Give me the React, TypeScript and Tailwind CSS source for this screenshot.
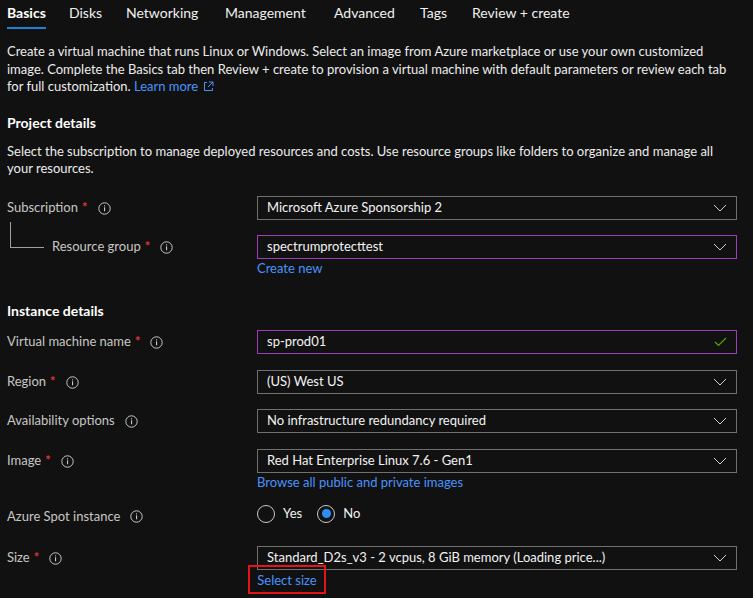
import React from "react";

const FONT = { fontFamily: "'Segoe UI', Lato, 'Noto Sans', sans-serif" };

function Info() {
  return (
    <svg width="13" height="13" viewBox="0 0 13 13" className="shrink-0">
      <circle cx="6.5" cy="6.5" r="5.7" fill="none" stroke="#c8c8c8" strokeWidth="1" />
      <rect x="6" y="5.3" width="1.1" height="4" fill="#c8c8c8" />
      <rect x="6" y="3.3" width="1.1" height="1.1" fill="#c8c8c8" />
    </svg>
  );
}

function Chevron() {
  return (
    <svg width="14" height="8" viewBox="0 0 14 8" className="shrink-0">
      <path d="M1 1 L7 7 L13 1" fill="none" stroke="#d0d0d0" strokeWidth="1" />
    </svg>
  );
}

function Check() {
  return (
    <svg width="13" height="10" viewBox="0 0 13 10" className="shrink-0">
      <path d="M1 5 L4.5 8.5 L12 1" fill="none" stroke="#57a300" strokeWidth="1.2" />
    </svg>
  );
}

function Label({ text, req, indent }: { text: string; req?: boolean; indent?: boolean }) {
  return (
    <div className={`w-[250px] shrink-0 flex items-center text-[13px] text-[#c8c6c4] pt-[1px] ${indent ? "pl-[45px]" : ""}`}>
      <span>{text}</span>
      {req && <span className="text-[#e0343b] ml-[4px] font-bold">*</span>}
      <span className="ml-[10px] flex items-center"><Info /></span>
    </div>
  );
}

function Box({ value, purple, check }: { value: string; purple?: boolean; check?: boolean }) {
  return (
    <div
      className={`w-[480px] h-[24px] flex items-center justify-between pl-[9px] pr-[9px] border ${
        purple ? "border-[#9e3cbb]" : "border-[#707070]"
      } text-[13px] text-[#f3f3f3]`}
    >
      <span className="whitespace-nowrap">{value}</span>
      {check ? <Check /> : <Chevron />}
    </div>
  );
}

function Link({ children }: { children: React.ReactNode }) {
  return <span className="text-[#4894fe] text-[13px] leading-[18px]">{children}</span>;
}

export default function App() {
  const tabs = [
    { t: "Basics", w: 62, active: true },
    { t: "Disks", w: 57 },
    { t: "Networking", w: 99 },
    { t: "Management", w: 109 },
    { t: "Advanced", w: 86 },
    { t: "Tags", w: 52 },
    { t: "Review + create", w: 130 },
  ];
  return (
    <div style={FONT} className="w-[753px] h-[598px] bg-[#111111] text-[#f0f0f0] overflow-hidden pl-[7px]">
      {/* Tabs */}
      <div className="flex h-[30px]">
        {tabs.map((tab) => (
          <div key={tab.t} style={{ width: tab.w }} className="flex flex-col items-start">
            <div className="flex flex-col">
              <span className={`text-[14px] leading-[26px] whitespace-nowrap ${tab.active ? "font-bold text-white" : "text-[#f0f0f0]"}`}>
                {tab.t}
              </span>
              <div className={`mt-[1px] h-[2px] ${tab.active ? "bg-[#1f7fd6]" : ""}`} />
            </div>
          </div>
        ))}
      </div>

      {/* Intro */}
      <div className="mt-[13px] text-[13px] leading-[17.5px] whitespace-nowrap text-[#ececec]">
        Create a virtual machine that runs Linux or Windows. Select an image from Azure marketplace or use your own customized
        <br />
        image. Complete the Basics tab then Review + create to provision a virtual machine with default parameters or review each tab
        <br />
        for full customization.{" "}
        <span className="text-[#4894fe] inline-flex items-center gap-[5px]">
          Learn more
          <svg width="11" height="11" viewBox="0 0 11 11">
            <path d="M4 1.5 H1.5 V9.5 H9.5 V7" fill="none" stroke="#4894fe" strokeWidth="1" />
            <path d="M6 1 H10 V5 M10 1 L5 6" fill="none" stroke="#4894fe" strokeWidth="1" />
          </svg>
        </span>
      </div>

      {/* Project details */}
      <div className="mt-[17px] text-[14px] leading-[20px] font-bold text-white">Project details</div>
      <div className="mt-[10px] text-[13px] leading-[17.5px] whitespace-nowrap text-[#ececec]">
        Select the subscription to manage deployed resources and costs. Use resource groups like folders to organize and manage all
        <br />
        your resources.
      </div>

      <div className="mt-[18px] flex items-center">
        <Label text="Subscription" req />
        <Box value="Microsoft Azure Sponsorship 2" />
      </div>

      <div className="mt-[15px] flex relative">
        <div className="absolute left-[3px] top-[-13px] w-[34px] h-[26px] border-l border-b border-[#a0a0a0]" />
        <div className="flex flex-col">
          <div className="flex items-center">
            <Label text="Resource group" req indent />
            <Box value="spectrumprotecttest" purple />
          </div>
          <div className="pl-[250px] h-[18px] flex items-center">
            <Link>Create new</Link>
          </div>
        </div>
      </div>

      {/* Instance details */}
      <div className="mt-[24px] text-[14px] leading-[20px] font-bold text-white">Instance details</div>

      <div className="mt-[9px] flex items-center">
        <Label text="Virtual machine name" req />
        <Box value="sp-prod01" purple check />
      </div>

      <div className="mt-[16px] flex items-center">
        <Label text="Region" req />
        <Box value="(US) West US" />
      </div>

      <div className="mt-[15px] flex items-center">
        <Label text="Availability options" />
        <Box value="No infrastructure redundancy required" />
      </div>

      <div className="mt-[16px] flex flex-col">
        <div className="flex items-center">
          <Label text="Image" req />
          <Box value="Red Hat Enterprise Linux 7.6 - Gen1" />
        </div>
        <div className="pl-[250px] h-[18px] flex items-center">
          <Link>Browse all public and private images</Link>
        </div>
      </div>

      <div className="mt-[11px] flex items-center h-[24px]">
        <div className="w-[250px] shrink-0 flex items-center text-[13px] text-[#c8c6c4] pt-[6px]">
          <span>Azure Spot instance</span>
          <span className="ml-[10px] flex items-center"><Info /></span>
        </div>
        <div className="flex items-center text-[13px] text-[#f3f3f3]">
          <div className="w-[18px] h-[18px] rounded-full border border-[#c8c8c8]" />
          <span className="ml-[8px]">Yes</span>
          <div className="ml-[15px] w-[18px] h-[18px] rounded-full border border-[#c8c8c8] flex items-center justify-center">
            <div className="w-[9px] h-[9px] rounded-full bg-[#2b8ff5]" />
          </div>
          <span className="ml-[8px]">No</span>
        </div>
      </div>

      <div className="mt-[20px] flex flex-col">
        <div className="flex items-center">
          <Label text="Size" req />
          <Box value="Standard_D2s_v3 - 2 vcpus, 8 GiB memory (Loading price...)" />
        </div>
        <div className="pl-[241px] flex">
          <div className="border-2 border-[#e3151a] h-[29px] w-[78px] mt-[-5px] flex items-center justify-center pt-[1px]">
            <Link>Select size</Link>
          </div>
        </div>
      </div>
    </div>
  );
}
